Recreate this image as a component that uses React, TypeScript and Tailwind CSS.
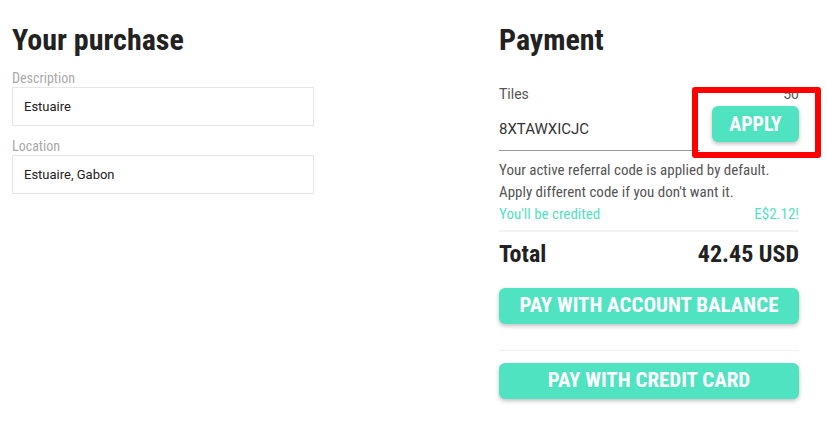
export default function App() {
  const cond = "font-['Roboto',sans-serif] [font-stretch:75%]";
  return (
    <div className="relative w-[827px] h-[428px] bg-white flex px-[12px] font-['Roboto',sans-serif] text-[#222]">
      {/* Left column */}
      <div className="w-[302px] flex flex-col pt-[22px]">
        <h1 className={`${cond} text-[30px] leading-[36px] font-bold text-[#222]`}>Your purchase</h1>
        <label className={`${cond} mt-[12px] text-[14px] leading-[16px] text-[#aaaaaa]`}>Description</label>
        <div className="mt-[1px] h-[39px] border border-[#e6e6e6] flex items-center px-[11px] text-[13px] text-[#222]">Estuaire</div>
        <label className={`${cond} mt-[12px] text-[14px] leading-[16px] text-[#aaaaaa]`}>Location</label>
        <div className="mt-[1px] h-[39px] border border-[#e6e6e6] flex items-center px-[11px] text-[13px] text-[#222]">Estuaire, Gabon</div>
      </div>

      <div className="w-[185px]" />

      {/* Right column */}
      <div className="w-[300px] flex flex-col pt-[22px]">
        <h1 className={`${cond} text-[30px] leading-[36px] font-bold text-[#222]`}>Payment</h1>
        <div className="mt-[28px] flex justify-between text-[14px] leading-[16px] text-[#555]">
          <span>Tiles</span>
          <span>50</span>
        </div>
        <div className="flex items-end gap-[12px]">
          <div className="flex-1 h-[49px] border-b border-[#999] flex items-center pt-[6px] text-[15px] text-[#333]">8XTAWXICJC</div>
          <button className={`${cond} mb-[9px] w-[87px] h-[36px] rounded-[6px] bg-[#50e3c2] text-white font-bold text-[20px] shadow-[0_2px_4px_rgba(0,0,0,0.25)]`}>APPLY</button>
        </div>
        <p className={`${cond} mt-[8px] text-[15px] leading-[22px] text-[#555]`}>Your active referral code is applied by default.</p>
        <p className={`${cond} text-[15px] leading-[22px] text-[#555]`}>Apply different code if you don't want it.</p>
        <div className={`${cond} flex justify-between text-[15px] leading-[22px] text-[#50e3c2]`}>
          <span>You'll be credited</span>
          <span>E$2.12!</span>
        </div>
        <div className="mt-[5px] border-t-2 border-[#f2f2f2]" />
        <div className={`${cond} mt-[8px] flex justify-between items-center text-[24px] leading-[28px] font-bold text-[#222]`}>
          <span>Total</span>
          <span>42.45 USD</span>
        </div>
        <button className={`${cond} mt-[20px] h-[36px] rounded-[6px] bg-[#50e3c2] text-white font-bold text-[21px] shadow-[0_2px_4px_rgba(0,0,0,0.25)]`}>PAY WITH ACCOUNT BALANCE</button>
        <div className="mt-[26px] border-t border-[#f0f0f0]" />
        <button className={`${cond} mt-[12px] h-[36px] rounded-[6px] bg-[#50e3c2] text-white font-bold text-[21px] shadow-[0_2px_4px_rgba(0,0,0,0.25)]`}>PAY WITH CREDIT CARD</button>
      </div>

      {/* Annotation overlay */}
      <div className="absolute left-[692px] top-[87px] w-[129px] h-[71px] border-[6px] border-[#ff0000] rounded-[3px]" />
    </div>
  );
}
